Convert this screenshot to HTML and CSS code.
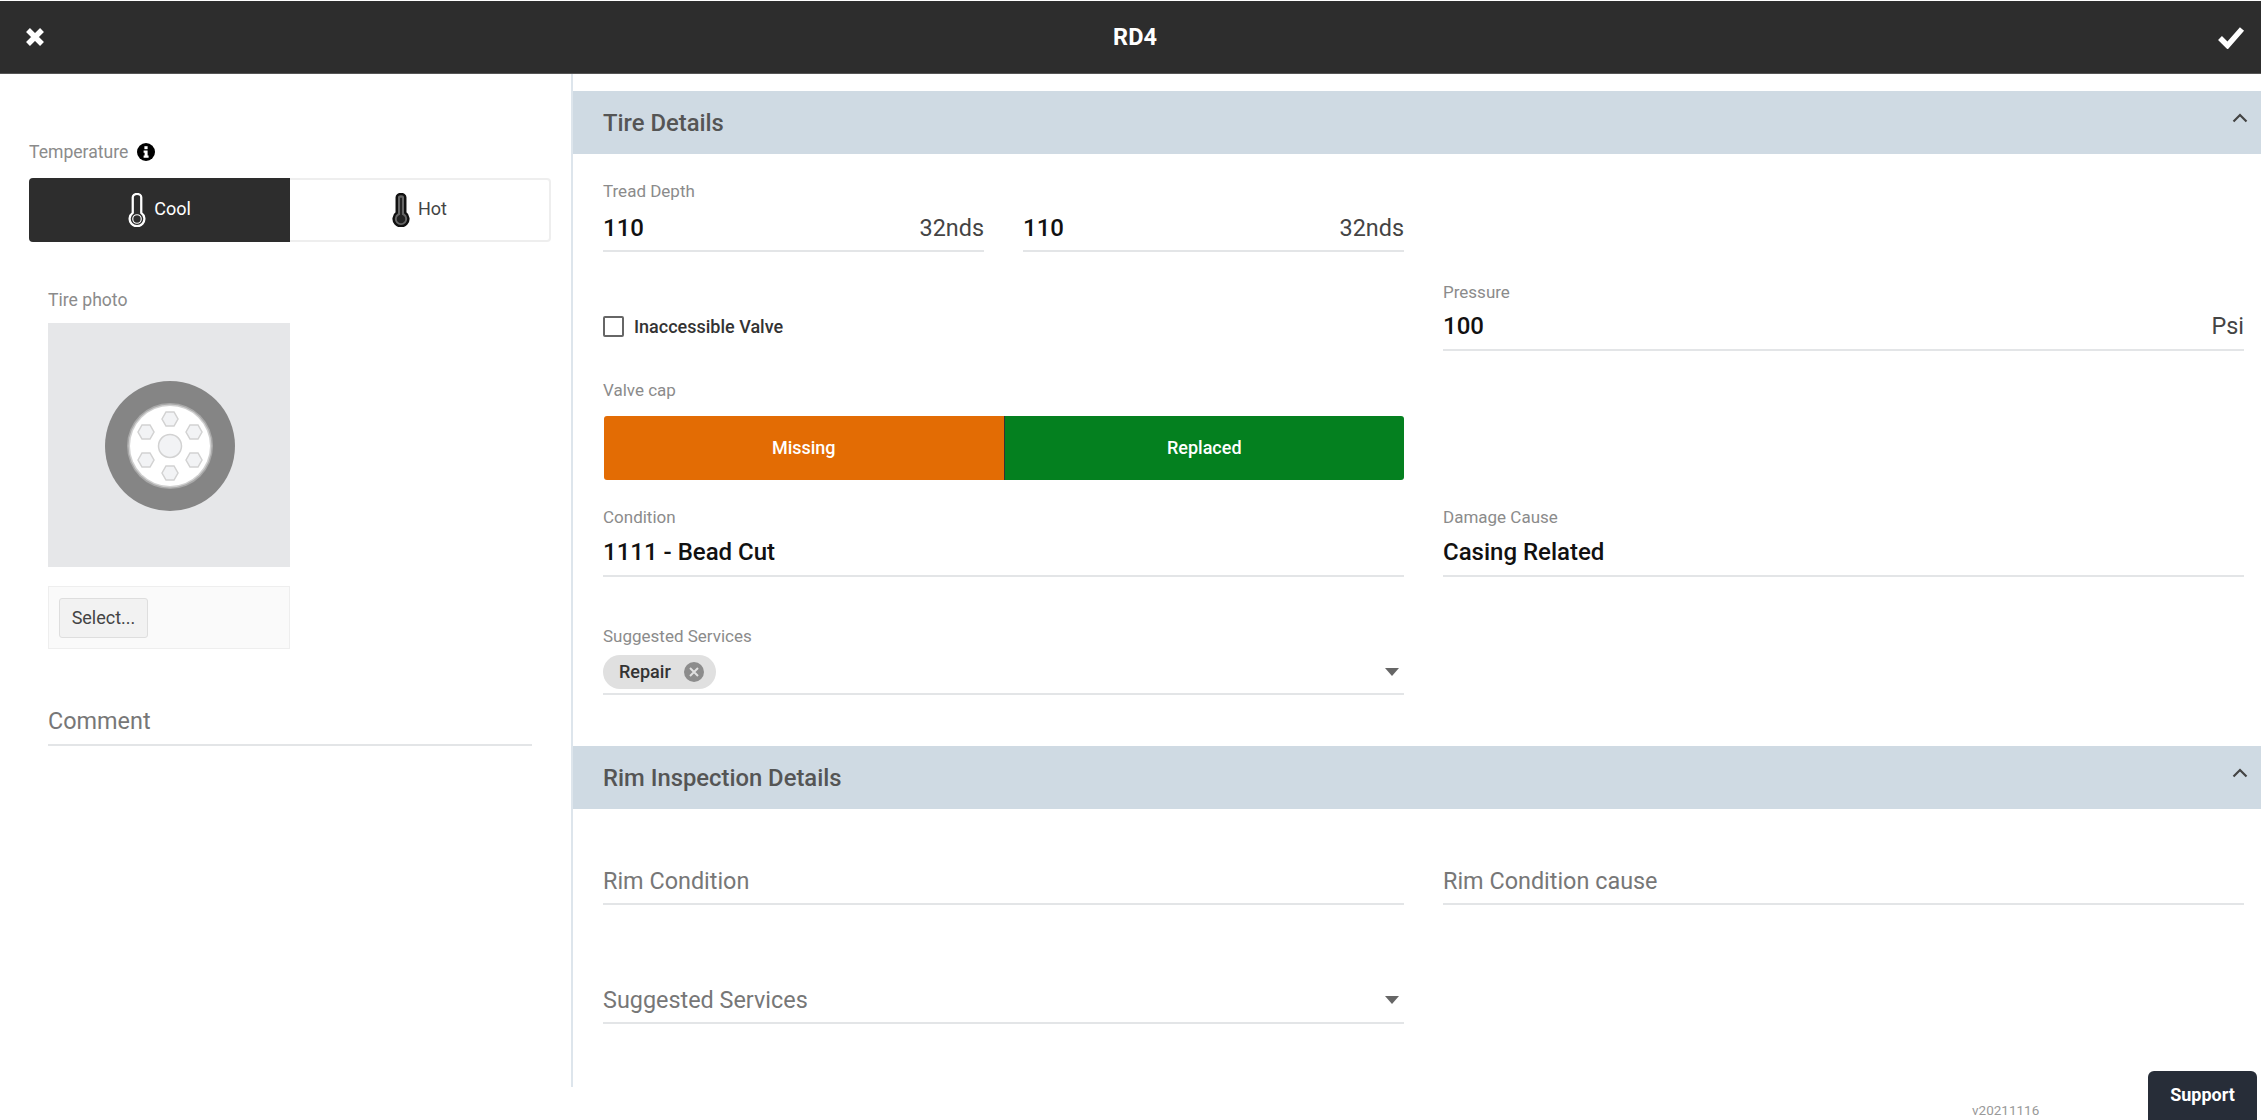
FILE: index.html
```html
<!DOCTYPE html>
<html lang="en">
<head>
  <meta charset="UTF-8">
  <title>RD4</title>
  <link rel="stylesheet" href="styles.css">
</head>
<body>

<header class="topbar">
  <svg class="topbar-icon" viewBox="0 0 24 24"><path d="M5 5 L19 19 M19 5 L5 19" /></svg>
  <h1>RD4</h1>
  <svg class="topbar-icon" viewBox="0 0 28 24"><path d="M3 13 L10.5 20.5 L25 4" /></svg>
</header>

<div class="layout">
  <!-- Left panel -->
  <aside class="sidebar">
    <div class="temp-label">
      <span>Temperature</span>
      <svg class="info-icon" viewBox="0 0 18 18">
        <circle cx="9" cy="9" r="9" fill="#000" />
        <rect x="7.4" y="3.2" width="3.2" height="3" fill="#fff" />
        <path d="M6.6 7.6 H10.6 V12.6 H11.6 V14.8 H6.6 V12.6 H7.6 V9.8 H6.6 Z" fill="#fff" />
      </svg>
    </div>
    <div class="temp-toggle">
      <div class="temp-option temp-active">
        <svg class="thermo" viewBox="0 0 18 36">
          <path d="M4.5 4.5 a4.5 3.5 0 0 1 9 0 V21 a7.8 7.8 0 1 1 -9 0 Z" fill="none" stroke="#fff" stroke-width="2.4" />
          <circle cx="9" cy="27.5" r="4.5" fill="#2d2d2d" stroke="#fff" stroke-width="1.2" />
        </svg>
        <span>Cool</span>
      </div>
      <div class="temp-option">
        <svg class="thermo" viewBox="0 0 18 36">
          <path d="M4.5 4.5 a4.5 3.5 0 0 1 9 0 V21 a7.8 7.8 0 1 1 -9 0 Z" fill="#666" stroke="#111" stroke-width="2.6" />
          <rect x="8" y="5" width="2" height="20" fill="#222" />
          <circle cx="9" cy="27.5" r="4.5" fill="#222" />
        </svg>
        <span>Hot</span>
      </div>
    </div>

    <div class="photo-block">
      <div class="label photo-label">Tire photo</div>
      <div class="photo">
        <svg class="tire" viewBox="0 0 132 132">
          <circle cx="66" cy="66" r="65" fill="#858585" />
          <circle cx="66" cy="66" r="43" fill="#a9a9a9" />
          <circle cx="66" cy="66" r="41.5" fill="#d0d0d0" />
          <circle cx="66" cy="66" r="40" fill="#fff" />
          <circle cx="66" cy="66" r="11.5" fill="#f2f3f5" stroke="#d2d2d2" stroke-width="1.5" />
          <g fill="#f2f3f5" stroke="#d2d2d2" stroke-width="1.5">
            <polygon points="58,39 62,32 70,32 74,39 70,46 62,46" />
            <polygon points="58,93 62,86 70,86 74,93 70,100 62,100" />
            <polygon points="34,52 38,45 46,45 50,52 46,59 38,59" />
            <polygon points="82,52 86,45 94,45 98,52 94,59 86,59" />
            <polygon points="34,80 38,73 46,73 50,80 46,87 38,87" />
            <polygon points="82,80 86,73 94,73 98,80 94,87 86,87" />
          </g>
        </svg>
      </div>
      <div class="upload-box">
        <div class="select-button">Select...</div>
      </div>
    </div>

    <div class="comment">Comment</div>
  </aside>

  <main class="content">
    <!-- Tire Details -->
    <section>
      <div class="section-head">
        <h2>Tire Details</h2>
        <svg class="chevron" viewBox="0 0 16 10"><path d="M1.5 8.5 L8 2 L14.5 8.5" /></svg>
      </div>
      <div class="section-body">
        <div class="row row-tread">
          <div class="field">
            <div class="label">Tread Depth</div>
            <div class="tread-pair">
              <div class="value-line value-tread"><span class="value">110</span><span class="unit">32nds</span></div>
              <div class="value-line value-tread"><span class="value">110</span><span class="unit">32nds</span></div>
            </div>
          </div>
        </div>

        <div class="row row-valve">
          <div>
            <label class="check">
              <span class="check-box"></span>
              <span>Inaccessible Valve</span>
            </label>
            <div class="label valve-label">Valve cap</div>
            <div class="valve-buttons">
              <div class="valve-missing">Missing</div>
              <div class="valve-replaced">Replaced</div>
            </div>
          </div>
          <div class="field">
            <div class="label">Pressure</div>
            <div class="value-line value-pressure"><span class="value">100</span><span class="unit">Psi</span></div>
          </div>
        </div>

        <div class="row row-condition">
          <div class="field">
            <div class="label">Condition</div>
            <div class="value-line"><span class="value">1111 - Bead Cut</span></div>
          </div>
          <div class="field">
            <div class="label">Damage Cause</div>
            <div class="value-line"><span class="value">Casing Related</span></div>
          </div>
        </div>

        <div class="row row-services">
          <div class="field">
            <div class="label">Suggested Services</div>
            <div class="chip-line">
              <span class="chip">
                Repair
                <svg class="chip-close" viewBox="0 0 20 20">
                  <circle cx="10" cy="10" r="10" fill="#8c8c8c" />
                  <path d="M6 6 L14 14 M14 6 L6 14" stroke="#e0e0e0" stroke-width="2" />
                </svg>
              </span>
              <span class="caret"></span>
            </div>
          </div>
        </div>
      </div>
    </section>

    <!-- Rim Inspection Details -->
    <section class="section-rim">
      <div class="section-head">
        <h2>Rim Inspection Details</h2>
        <svg class="chevron" viewBox="0 0 16 10"><path d="M1.5 8.5 L8 2 L14.5 8.5" /></svg>
      </div>
      <div class="section-body">
        <div class="row row-rim">
          <div class="placeholder-line">Rim Condition</div>
          <div class="placeholder-line">Rim Condition cause</div>
        </div>
        <div class="row row-rim-services">
          <div class="placeholder-line">Suggested Services<span class="caret"></span></div>
        </div>
      </div>
    </section>
  </main>
</div>

<div class="version">v20211116</div>
<a href="#" class="support">Support</a>

</body>
</html>
```

FILE: styles.css
```css
:root {
  --dark: #2d2d2d;
  --section: #cfdae3;
  --divider: #dde5ec;
  --line: #e3e5e7;
  --label: #8b8b8b;
  --placeholder: #777;
}

* {
  box-sizing: border-box;
}

html, body {
  height: 100%;
}

body {
  margin: 0;
  overflow: hidden;
  background: #fff;
  color: #111;
  font-family: Roboto, sans-serif;
}

.topbar {
  display: flex;
  align-items: center;
  justify-content: space-between;
  height: 73px;
  margin-top: 1px;
  padding: 0 16px 0 23px;
  background: var(--dark);
  border-bottom: 1px solid #555;
}

.topbar h1 {
  margin: 0 0 0 6px;
  color: #fff;
  font-size: 23.5px;
  font-weight: 700;
}

.topbar-icon {
  width: 24px;
  height: 24px;
  fill: none;
  stroke: #fff;
  stroke-width: 5.5;
}

.topbar-icon:last-child {
  width: 28px;
}

.layout {
  display: flex;
  height: 1013px;
}

.sidebar {
  flex: 0 0 573px;
  padding: 68px 20px 0 29px;
  border-right: 2px solid var(--divider);
}

.label {
  color: var(--label);
  font-size: 17px;
  line-height: 20px;
}

.temp-label {
  display: flex;
  align-items: center;
  gap: 9px;
  height: 20px;
  color: var(--label);
  font-size: 17.6px;
}

.info-icon {
  width: 18px;
  height: 18px;
}

.temp-toggle {
  display: flex;
  width: 522px;
  height: 64px;
  margin-top: 16px;
  border: 2px solid #eeeeee;
  border-radius: 4px;
}

.temp-option {
  display: flex;
  flex: 1;
  align-items: center;
  justify-content: center;
  gap: 8px;
  color: #444;
  font-size: 18px;
  line-height: 20px;
}

.temp-option span {
  margin-top: -2px;
}

.temp-active {
  flex: 0 0 261px;
  margin: -2px 0 -2px -2px;
  border-radius: 4px 0 0 4px;
  background: var(--dark);
  color: #fff;
}

.thermo {
  width: 18px;
  height: 34px;
}

.photo-block {
  width: 242px;
  margin: 48px 0 0 19px;
}

.photo-label {
  font-size: 17.6px;
}

.photo {
  display: flex;
  align-items: center;
  justify-content: center;
  height: 244px;
  margin-top: 13px;
  padding: 2px 0 0 2px;
  background: #e6e7e9;
}

.tire {
  width: 132px;
  height: 132px;
}

.upload-box {
  height: 63px;
  margin-top: 19px;
  padding: 11px 10px;
  background: #fafafa;
  border: 1px solid #eeeeee;
}

.select-button {
  width: 89px;
  height: 40px;
  background: #f2f2f2;
  border: 1px solid #dedede;
  border-radius: 3px;
  color: #444;
  font-size: 18px;
  line-height: 38px;
  text-align: center;
}

.comment {
  margin: 56px 0 0 19px;
  width: 484px;
  padding-bottom: 7px;
  border-bottom: 2px solid var(--line);
  color: var(--placeholder);
  font-size: 23.4px;
  line-height: 32px;
}

.content {
  flex: 1;
  padding-top: 17px;
}

.section-head {
  display: flex;
  align-items: center;
  justify-content: space-between;
  height: 63px;
  padding: 0 13px 0 30px;
  background: var(--section);
}

.section-head h2 {
  margin: 0;
  color: #555;
  font-size: 23.8px;
  font-weight: 500;
}

.chevron {
  width: 16px;
  height: 10px;
  margin-top: -9px;
  fill: none;
  stroke: #444;
  stroke-width: 2.2;
}

.section-body {
  padding: 0 16px 0 30px;
}

.row {
  display: grid;
  grid-template-columns: 801px 801px;
  gap: 39px;
}

.row-tread {
  padding-top: 27px;
}

.tread-pair {
  display: grid;
  grid-template-columns: 381px 381px;
  gap: 39px;
}

.value-line {
  display: flex;
  align-items: center;
  justify-content: space-between;
  height: 50px;
  padding-top: 2px;
  border-bottom: 2px solid var(--line);
}

.value-tread {
  height: 51px;
  padding-top: 5px;
}

.value-pressure {
  height: 49px;
  padding-top: 0;
}

.value {
  font-size: 24px;
  font-weight: 500;
}

.unit {
  color: #444;
  font-size: 23.4px;
}

.row-valve {
  margin-top: 30px;
}

.check {
  display: flex;
  align-items: center;
  gap: 10px;
  margin-top: 34px;
  color: #333;
  font-size: 18px;
  font-weight: 500;
}

.check-box {
  width: 21px;
  height: 21px;
  border: 2px solid #666;
  border-radius: 2px;
}

.valve-label {
  margin-top: 43px;
}

.valve-buttons {
  display: flex;
  height: 64px;
  margin-top: 16px;
  margin-left: 1px;
  color: #fff;
  font-size: 18px;
  font-weight: 500;
  line-height: 64px;
  text-align: center;
}

.valve-missing {
  flex: 1;
  background: #e36c04;
  border-radius: 3px 0 0 3px;
}

.valve-replaced {
  flex: 1;
  background: #04801f;
  border-left: 1px solid #333;
  border-radius: 0 3px 3px 0;
}

.row-condition {
  margin-top: 27px;
}

.row-services {
  margin-top: 49px;
}

.chip-line {
  display: flex;
  align-items: center;
  justify-content: space-between;
  height: 49px;
  padding-top: 4px;
  border-bottom: 2px solid var(--line);
}

.chip {
  display: inline-flex;
  align-items: center;
  gap: 13px;
  height: 34px;
  padding: 0 12px 0 16px;
  background: #e0e0e0;
  border-radius: 17px;
  color: #333;
  font-size: 18px;
  font-weight: 500;
}

.chip-close {
  width: 20px;
  height: 20px;
}

.caret {
  width: 0;
  height: 0;
  margin-right: 5px;
  border-top: 8px solid #666;
  border-left: 7px solid transparent;
  border-right: 7px solid transparent;
}

.section-rim {
  margin-top: 51px;
}

.placeholder-line {
  display: flex;
  align-items: center;
  justify-content: space-between;
  height: 42px;
  padding-bottom: 5px;
  border-bottom: 2px solid var(--line);
  color: var(--placeholder);
  font-size: 23.4px;
}

.row-rim {
  padding-top: 54px;
}

.row-rim-services {
  margin-top: 77px;
}

.version {
  position: absolute;
  left: 1972px;
  top: 1102px;
  color: #999;
  font-size: 13.5px;
}

.support {
  position: absolute;
  left: 2148px;
  top: 1071px;
  width: 109px;
  height: 50px;
  background: #272d38;
  border-radius: 6px 6px 0 0;
  color: #fff;
  font-size: 18px;
  font-weight: 700;
  line-height: 48px;
  text-align: center;
  text-decoration: none;
}
```
